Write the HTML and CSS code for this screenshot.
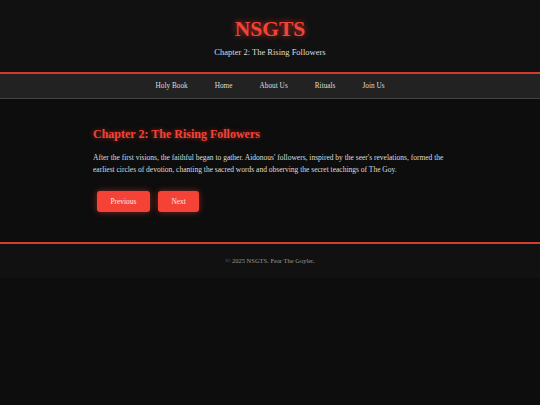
FILE: index.html
```html
<!DOCTYPE html>
<html lang="en">
<head>
<meta charset="utf-8">
<title>NSGTS - Chapter 2</title>
<link rel="stylesheet" href="styles.css">
</head>
<body>
<header class="site-header">
  <h1 class="site-title">NSGTS</h1>
  <p class="site-subtitle">Chapter 2: The Rising Followers</p>
</header>
<nav class="site-nav">
  <a href="#">Holy Book</a>
  <a href="#">Home</a>
  <a href="#">About Us</a>
  <a href="#">Rituals</a>
  <a href="#">Join Us</a>
</nav>
<main class="chapter">
  <h2 class="chapter-title">Chapter 2: The Rising Followers</h2>
  <p class="chapter-text">After the first visions, the faithful began to gather. Aidonous' followers, inspired by the seer's revelations, formed the earliest circles of devotion, chanting the sacred words and observing the secret teachings of The Goy.</p>
  <div class="pager">
    <a class="btn" href="#">Previous</a>
    <a class="btn" href="#">Next</a>
  </div>
</main>
<footer class="site-footer">
  <p>&copy; 2025 NSGTS. Fear The Goyler.</p>
</footer>
</body>
</html>
```

FILE: styles.css
```css
* { box-sizing: border-box; }
html, body {
  margin: 0;
  padding: 0;
  background: #0d0d0d;
  font-family: "Liberation Serif", "Times New Roman", serif;
  color: #ddd;
}
.site-header {
  background: #111;
  text-align: center;
  padding: 17px 0 14px;
  border-bottom: 2px solid #d23b30;
}
.site-title {
  margin: 0;
  font-size: 21.5px;
  line-height: 24px;
  font-weight: bold;
  color: #f44336;
  text-shadow: 0 0 6px rgba(244, 67, 54, 0.75);
}
.site-subtitle {
  margin: 5px 0 0;
  font-size: 8.5px;
  line-height: 12px;
  color: #ddd;
}
.site-nav {
  background: #222;
  border-bottom: 1px solid #444;
  display: flex;
  justify-content: center;
  gap: 27px;
  height: 25px;
}
.site-nav a {
  color: #ddd;
  text-decoration: none;
  font-size: 7.3px;
  line-height: 24px;
}
.chapter {
  width: 354px;
  margin: 0 auto;
  padding: 28px 0 26px;
}
.chapter-title {
  margin: 0;
  font-size: 12px;
  line-height: 14px;
  font-weight: bold;
  color: #f44336;
  text-shadow: 0 0 5px rgba(244, 67, 54, 0.6);
}
.chapter-text {
  margin: 11px 0 0;
  font-size: 7.5px;
  line-height: 11.5px;
  color: #ddd;
}
.pager {
  margin-top: 12px;
  display: flex;
}
.btn {
  display: block;
  margin: 4px;
  height: 21px;
  line-height: 21px;
  padding: 0 13.5px;
  background: #f44336;
  color: #ffe8e5;
  font-size: 7.4px;
  text-decoration: none;
  border-radius: 3px;
  box-shadow: 0 0 6px rgba(244, 67, 54, 0.5);
}
.site-footer {
  background: #111;
  border-top: 2px solid #d23b30;
  text-align: center;
}
.site-footer p {
  margin: 0;
  font-size: 6.5px;
  line-height: 34px;
  color: #999;
}
```
